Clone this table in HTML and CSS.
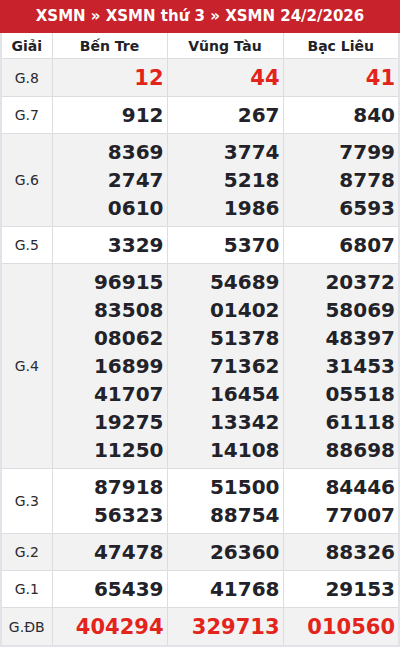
FILE: index.html
```html
<!DOCTYPE html>
<html lang="vi">
<head>
<meta charset="utf-8">
<link rel="stylesheet" href="styles.css">
</head>
<body>
<div class="box">
  <div class="title">XSMN » XSMN thứ 3 » XSMN 24/2/2026</div>
  <table class="kq">
    <colgroup><col class="c0"><col class="c1"><col class="c2"><col class="c3"></colgroup>
    <thead>
      <tr><th>Giải</th><th>Bến Tre</th><th>Vũng Tàu</th><th>Bạc Liêu</th></tr>
    </thead>
    <tbody>
      <tr class="alt"><td class="lb">G.8</td><td class="n red">12</td><td class="n red">44</td><td class="n red">41</td></tr>
      <tr><td class="lb">G.7</td><td class="n">912</td><td class="n">267</td><td class="n">840</td></tr>
      <tr class="alt"><td class="lb">G.6</td><td class="n">8369<br>2747<br>0610</td><td class="n">3774<br>5218<br>1986</td><td class="n">7799<br>8778<br>6593</td></tr>
      <tr><td class="lb">G.5</td><td class="n">3329</td><td class="n">5370</td><td class="n">6807</td></tr>
      <tr class="alt"><td class="lb">G.4</td><td class="n">96915<br>83508<br>08062<br>16899<br>41707<br>19275<br>11250</td><td class="n">54689<br>01402<br>51378<br>71362<br>16454<br>13342<br>14108</td><td class="n">20372<br>58069<br>48397<br>31453<br>05518<br>61118<br>88698</td></tr>
      <tr><td class="lb">G.3</td><td class="n">87918<br>56323</td><td class="n">51500<br>88754</td><td class="n">84446<br>77007</td></tr>
      <tr class="alt"><td class="lb">G.2</td><td class="n">47478</td><td class="n">26360</td><td class="n">88326</td></tr>
      <tr><td class="lb">G.1</td><td class="n">65439</td><td class="n">41768</td><td class="n">29153</td></tr>
      <tr class="alt"><td class="lb">G.ĐB</td><td class="n red">404294</td><td class="n red">329713</td><td class="n red">010560</td></tr>
    </tbody>
  </table>
</div>
</body>
</html>
```
FILE: styles.css
```css
html, body { margin: 0; padding: 0; background: #fff; }
body { font-family: "DejaVu Sans", Verdana, sans-serif; color: #222228; }
.box {
  width: 400px;
  box-sizing: border-box;
  border-left: 2px solid #e1e3e9;
  border-right: 2px solid #e1e3e9;
  border-bottom: 2px solid #e1e3e9;
}
.title {
  margin: 0 -2px;
  height: 33px;
  line-height: 33px;
  background: #c8222c;
  color: #fff;
  font-weight: bold;
  font-size: 15px;
  text-align: center;
}
.kq {
  width: 100%;
  border-collapse: collapse;
  table-layout: fixed;
}
.c0 { width: 50px; }
.c1 { width: 115px; }
.c2 { width: 116px; }
.c3 { width: 115px; }
.kq th, .kq td {
  border: 1px solid #dcdde1;
}
.kq tr:first-child th { border-top: none; }
.kq tr > :first-child { border-left: none; }
.kq tr > :last-child { border-right: none; }
.kq tbody tr:last-child td { border-bottom: none; }
.kq th {
  height: 25px;
  padding: 0;
  font-size: 14px;
  font-weight: bold;
  text-align: center;
  color: #222228;
}
.kq tr.alt td { background: #f2f2f3; }
.lb {
  text-align: center;
  font-size: 14px;
  color: #2a2a30;
  padding: 0;
}
.n {
  text-align: right;
  font-weight: bold;
  font-size: 20px;
  line-height: 28px;
  padding: 4px 3px 4px 0;
}
.red { color: #e3241b; font-size: 21px; padding-top: 5px; }
```
